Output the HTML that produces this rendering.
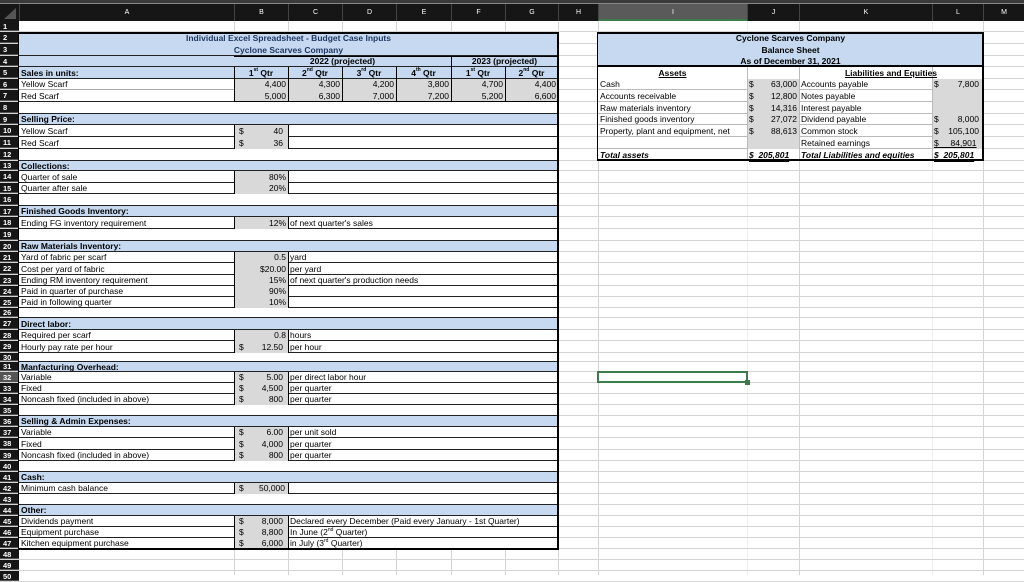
<!DOCTYPE html>
<html><head><meta charset="utf-8">
<style>
*{margin:0;padding:0;box-sizing:border-box}
body{width:1024px;height:575px;overflow:hidden;background:#fff;position:relative;font-family:"Liberation Sans",Arial,sans-serif;font-size:8.5px;color:#000}
div{position:absolute}
.top{left:0;top:0;width:1024px;height:4px;background:#3a3a3a;border-bottom:1px solid #888}
.hdr{left:0;top:4px;width:1024px;height:17px;background:#161616}
.ch{top:4px;height:17px;line-height:17px;text-align:center;color:#fff;font-size:7px;border-left:1px solid #444}
.vl{top:21px;height:554px;width:1px;background:#d4d4d4}
.rw{left:0;width:1024px;border-bottom:1px solid #d4d4d4}
.rw b{position:absolute;left:0;top:0;width:19px;height:100%;background:#161616;color:#fff;font-size:7.5px;padding-left:3px;border-bottom:1px solid #555}
.c{white-space:nowrap;padding:0 2px}
.bl{background:#c6d9f0}
.gy{background:#d9d9d9}
.pl{left:19px;width:539px;border-bottom:1px solid #222}
.rp{left:598px;width:385px;border-bottom:1px solid #bbb}
.A{left:19px;width:215px}.B{left:234px;width:54px}.C{left:288px;width:54px}.D{left:342px;width:54px}.E{left:396px;width:55px}.F{left:451px;width:54px}.G{left:505px;width:53px}
.I{left:598px;width:149px}.J{left:747px;width:52px}.K{left:799px;width:133px}.L{left:932px;width:51px}
.r{text-align:right}.ce{text-align:center}.bd{font-weight:bold}
.br{border-right:1px solid #000}
.d{left:237px}
sup{font-size:5px;vertical-align:top;line-height:7px}
.r1{top:21px;height:11px;line-height:11px}.r2{top:32px;height:12px;line-height:12px}.r3{top:44px;height:12px;line-height:12px}.r4{top:56px;height:11px;line-height:11px}
.r5{top:67px;height:12px;line-height:12px}.r6{top:79px;height:11px;line-height:11px}.r7{top:90px;height:12px;line-height:12px}.r8{top:102px;height:12px;line-height:12px}
.r9{top:114px;height:11px;line-height:11px}.r10{top:125px;height:12px;line-height:12px}.r11{top:137px;height:12px;line-height:12px}.r12{top:149px;height:12px;line-height:12px}
.r13{top:161px;height:10px;line-height:10px}.r14{top:171px;height:12px;line-height:12px}.r15{top:183px;height:11px;line-height:11px}.r16{top:194px;height:12px;line-height:12px}
.r17{top:206px;height:11px;line-height:11px}.r18{top:217px;height:12px;line-height:12px}.r19{top:229px;height:12px;line-height:12px}.r20{top:241px;height:11px;line-height:11px}
.r21{top:252px;height:11px;line-height:11px}.r22{top:263px;height:12px;line-height:12px}.r23{top:275px;height:11px;line-height:11px}.r24{top:286px;height:11px;line-height:11px}
.r25{top:297px;height:11px;line-height:11px}.r26{top:308px;height:10px;line-height:10px}.r27{top:318px;height:12px;line-height:12px}.r28{top:330px;height:11px;line-height:11px}
.r29{top:341px;height:12px;line-height:12px}.r30{top:353px;height:9px;line-height:9px}.r31{top:362px;height:10px;line-height:10px}.r32{top:372px;height:11px;line-height:11px}
.r33{top:383px;height:11px;line-height:11px}.r34{top:394px;height:11px;line-height:11px}.r35{top:405px;height:11px;line-height:11px}.r36{top:416px;height:11px;line-height:11px}
.r37{top:427px;height:11px;line-height:11px}.r38{top:438px;height:12px;line-height:12px}.r39{top:450px;height:11px;line-height:11px}.r40{top:461px;height:11px;line-height:11px}
.r41{top:472px;height:11px;line-height:11px}.r42{top:483px;height:11px;line-height:11px}.r43{top:494px;height:11px;line-height:11px}.r44{top:505px;height:11px;line-height:11px}
.r45{top:516px;height:11px;line-height:11px}.r46{top:527px;height:11px;line-height:11px}.r47{top:538px;height:11px;line-height:11px}.r48{top:549px;height:11px;line-height:11px}
.r49{top:560px;height:11px;line-height:11px}.r50{top:571px;height:11px;line-height:11px}
</style></head><body>
<div class="top"></div>
<div class="hdr"></div>
<div style="left:4px;top:8px;width:0;height:0;border-left:12px solid transparent;border-bottom:11px solid #555"></div>
<div class="ch" style="left:19px;width:215px">A</div><div class="ch" style="left:234px;width:54px">B</div><div class="ch" style="left:288px;width:54px">C</div><div class="ch" style="left:342px;width:54px">D</div><div class="ch" style="left:396px;width:55px">E</div><div class="ch" style="left:451px;width:54px">F</div><div class="ch" style="left:505px;width:53px">G</div><div class="ch" style="left:558px;width:40px">H</div><div class="ch" style="left:598px;width:149px;background:#5a5a5a;border-bottom:2px solid #3c7a4a">I</div><div class="ch" style="left:747px;width:52px">J</div><div class="ch" style="left:799px;width:133px">K</div><div class="ch" style="left:932px;width:51px">L</div><div class="ch" style="left:983px;width:41px">M</div>

<div class="vl" style="left:234px"></div><div class="vl" style="left:288px"></div><div class="vl" style="left:342px"></div><div class="vl" style="left:396px"></div><div class="vl" style="left:451px"></div><div class="vl" style="left:505px"></div><div class="vl" style="left:558px"></div><div class="vl" style="left:598px"></div><div class="vl" style="left:747px;background:#eee"></div><div class="vl" style="left:799px"></div><div class="vl" style="left:932px;background:#eee"></div><div class="vl" style="left:983px"></div>

<div class="rw r1"><b>1</b></div><div class="rw r2"><b>2</b></div><div class="rw r3"><b>3</b></div><div class="rw r4"><b>4</b></div><div class="rw r5"><b>5</b></div><div class="rw r6"><b>6</b></div><div class="rw r7"><b>7</b></div><div class="rw r8"><b>8</b></div><div class="rw r9"><b>9</b></div><div class="rw r10"><b>10</b></div><div class="rw r11"><b>11</b></div><div class="rw r12"><b>12</b></div><div class="rw r13"><b>13</b></div><div class="rw r14"><b>14</b></div><div class="rw r15"><b>15</b></div><div class="rw r16"><b>16</b></div><div class="rw r17"><b>17</b></div><div class="rw r18"><b>18</b></div><div class="rw r19"><b>19</b></div><div class="rw r20"><b>20</b></div><div class="rw r21"><b>21</b></div><div class="rw r22"><b>22</b></div><div class="rw r23"><b>23</b></div><div class="rw r24"><b>24</b></div><div class="rw r25"><b>25</b></div><div class="rw r26"><b>26</b></div><div class="rw r27"><b>27</b></div><div class="rw r28"><b>28</b></div><div class="rw r29"><b>29</b></div><div class="rw r30"><b>30</b></div><div class="rw r31"><b>31</b></div><div class="rw r32"><b style="background:#555">32</b></div><div class="rw r33"><b>33</b></div><div class="rw r34"><b>34</b></div><div class="rw r35"><b>35</b></div><div class="rw r36"><b>36</b></div><div class="rw r37"><b>37</b></div><div class="rw r38"><b>38</b></div><div class="rw r39"><b>39</b></div><div class="rw r40"><b>40</b></div><div class="rw r41"><b>41</b></div><div class="rw r42"><b>42</b></div><div class="rw r43"><b>43</b></div><div class="rw r44"><b>44</b></div><div class="rw r45"><b>45</b></div><div class="rw r46"><b>46</b></div><div class="rw r47"><b>47</b></div><div class="rw r48"><b>48</b></div><div class="rw r49"><b>49</b></div><div class="rw r50"><b>50</b></div>

<!-- LEFT PANEL -->
<div style="left:19px;top:32px;width:539px;height:517px;background:#fff"></div>
<div class="bl" style="left:19px;top:32px;width:539px;height:24px;border-bottom:1px solid #222"></div>
<div class="bl pl r4"></div><div class="bl pl r5"></div>
<div class="pl r6" style="border-color:#aaa"></div><div class="pl r7"></div><div class="pl r8"></div>
<div class="bl pl r9"></div><div class="pl r10"></div><div class="pl r11"></div><div class="pl r12"></div>
<div class="bl pl r13"></div><div class="pl r14"></div><div class="pl r15"></div><div class="pl r16"></div>
<div class="bl pl r17"></div><div class="pl r18"></div><div class="pl r19"></div>
<div class="bl pl r20"></div><div class="pl r21"></div><div class="pl r22"></div><div class="pl r23"></div><div class="pl r24"></div><div class="pl r25"></div><div class="pl r26"></div>
<div class="bl pl r27"></div><div class="pl r28"></div><div class="pl r29"></div><div class="pl r30"></div>
<div class="bl pl r31"></div><div class="pl r32"></div><div class="pl r33"></div><div class="pl r34"></div><div class="pl r35"></div>
<div class="bl pl r36"></div><div class="pl r37"></div><div class="pl r38"></div><div class="pl r39"></div><div class="pl r40"></div>
<div class="bl pl r41"></div><div class="pl r42"></div><div class="pl r43"></div>
<div class="bl pl r44"></div><div class="pl r45"></div><div class="pl r46"></div><div class="pl r47"></div>

<!-- gray inputs -->
<div class="gy" style="left:234px;top:79px;width:324px;height:23px;border-left:1px solid #000;border-bottom:1px solid #000"></div>
<div style="left:288px;top:79px;width:1px;height:23px;background:#000"></div><div style="left:342px;top:79px;width:1px;height:23px;background:#000"></div><div style="left:396px;top:79px;width:1px;height:23px;background:#000"></div><div style="left:451px;top:79px;width:1px;height:23px;background:#000"></div><div style="left:505px;top:79px;width:1px;height:23px;background:#000"></div>
<div style="left:234px;top:67px;width:1px;height:35px;background:#000"></div>
<div style="left:234px;top:56px;width:324px;height:1px;background:#000"></div>
<div style="left:451px;top:56px;width:1px;height:11px;background:#000"></div>
<div style="left:288px;top:67px;width:1px;height:12px;background:#000"></div><div style="left:342px;top:67px;width:1px;height:12px;background:#000"></div><div style="left:396px;top:67px;width:1px;height:12px;background:#000"></div><div style="left:451px;top:67px;width:1px;height:12px;background:#000"></div><div style="left:505px;top:67px;width:1px;height:12px;background:#000"></div>
<div class="gy br" style="left:234px;top:125px;width:55px;height:24px;border-left:1px solid #000"></div>
<div class="gy br" style="left:234px;top:171px;width:55px;height:23px;border-left:1px solid #000"></div>
<div class="gy br" style="left:234px;top:217px;width:55px;height:12px;border-left:1px solid #000"></div>
<div class="gy br" style="left:234px;top:252px;width:55px;height:56px;border-left:1px solid #000"></div>
<div class="gy br" style="left:234px;top:330px;width:55px;height:23px;border-left:1px solid #000"></div>
<div class="gy br" style="left:234px;top:372px;width:55px;height:33px;border-left:1px solid #000"></div>
<div class="gy br" style="left:234px;top:427px;width:55px;height:34px;border-left:1px solid #000"></div>
<div class="gy br" style="left:234px;top:483px;width:55px;height:11px;border-left:1px solid #000"></div>
<div class="gy br" style="left:234px;top:516px;width:55px;height:33px;border-left:1px solid #000"></div>

<!-- left texts -->
<div class="c bd ce" style="left:19px;width:539px;top:33px;height:11px;line-height:11px;color:#1f3864">Individual Excel Spreadsheet - Budget Case Inputs</div>
<div class="c bd ce r3" style="left:19px;width:539px;color:#1f3864">Cyclone Scarves Company</div>
<div class="c bd ce r4" style="left:234px;width:217px">2022 (projected)</div>
<div class="c bd ce r4" style="left:451px;width:107px">2023 (projected)</div>
<div class="c bd A r5">Sales in units:</div>
<div class="c bd ce B r5">1<sup>st</sup> Qtr</div><div class="c bd ce C r5">2<sup>nd</sup> Qtr</div><div class="c bd ce D r5">3<sup>rd</sup> Qtr</div><div class="c bd ce E r5">4<sup>th</sup> Qtr</div><div class="c bd ce F r5">1<sup>st</sup> Qtr</div><div class="c bd ce G r5">2<sup>nd</sup> Qtr</div>
<div class="c A r6">Yellow Scarf</div><div class="c r B r6">4,400</div><div class="c r C r6">4,300</div><div class="c r D r6">4,200</div><div class="c r E r6">3,800</div><div class="c r F r6">4,700</div><div class="c r G r6">4,400</div>
<div class="c A r7">Red Scarf</div><div class="c r B r7">5,000</div><div class="c r C r7">6,300</div><div class="c r D r7">7,000</div><div class="c r E r7">7,200</div><div class="c r F r7">5,200</div><div class="c r G r7">6,600</div>
<div class="c bd A r9">Selling Price:</div>
<div class="c A r10">Yellow Scarf</div><div class="c d r10">$</div><div class="c r B r10" style="padding-right:5px">40</div>
<div class="c A r11">Red Scarf</div><div class="c d r11">$</div><div class="c r B r11" style="padding-right:5px">36</div>
<div class="c bd A r13">Collections:</div>
<div class="c A r14">Quarter of sale</div><div class="c r B r14">80%</div>
<div class="c A r15">Quarter after sale</div><div class="c r B r15">20%</div>
<div class="c bd A r17">Finished Goods Inventory:</div>
<div class="c A r18">Ending FG inventory requirement</div><div class="c r B r18">12%</div><div class="c C r18">of next quarter's sales</div>
<div class="c bd A r20">Raw Materials Inventory:</div>
<div class="c A r21">Yard of fabric per scarf</div><div class="c r B r21">0.5</div><div class="c C r21">yard</div>
<div class="c A r22">Cost per yard of fabric</div><div class="c r B r22">$20.00</div><div class="c C r22">per yard</div>
<div class="c A r23">Ending RM inventory requirement</div><div class="c r B r23">15%</div><div class="c C r23">of next quarter's production needs</div>
<div class="c A r24">Paid in quarter of purchase</div><div class="c r B r24">90%</div>
<div class="c A r25">Paid in following quarter</div><div class="c r B r25">10%</div>
<div class="c bd A r27">Direct labor:</div>
<div class="c A r28">Required per scarf</div><div class="c r B r28">0.8</div><div class="c C r28">hours</div>
<div class="c A r29">Hourly pay rate per hour</div><div class="c d r29">$</div><div class="c r B r29" style="padding-right:5px">12.50</div><div class="c C r29">per hour</div>
<div class="c bd A r31">Manfacturing Overhead:</div>
<div class="c A r32">Variable</div><div class="c d r32">$</div><div class="c r B r32" style="padding-right:5px">5.00</div><div class="c C r32">per direct labor hour</div>
<div class="c A r33">Fixed</div><div class="c d r33">$</div><div class="c r B r33" style="padding-right:5px">4,500</div><div class="c C r33">per quarter</div>
<div class="c A r34">Noncash fixed (included in above)</div><div class="c d r34">$</div><div class="c r B r34" style="padding-right:5px">800</div><div class="c C r34">per quarter</div>
<div class="c bd A r36">Selling &amp; Admin Expenses:</div>
<div class="c A r37">Variable</div><div class="c d r37">$</div><div class="c r B r37" style="padding-right:5px">6.00</div><div class="c C r37">per unit sold</div>
<div class="c A r38">Fixed</div><div class="c d r38">$</div><div class="c r B r38" style="padding-right:5px">4,000</div><div class="c C r38">per quarter</div>
<div class="c A r39">Noncash fixed (included in above)</div><div class="c d r39">$</div><div class="c r B r39" style="padding-right:5px">800</div><div class="c C r39">per quarter</div>
<div class="c bd A r41">Cash:</div>
<div class="c A r42">Minimum cash balance</div><div class="c d r42">$</div><div class="c r B r42" style="padding-right:3px">50,000</div>
<div class="c bd A r44">Other:</div>
<div class="c A r45">Dividends payment</div><div class="c d r45">$</div><div class="c r B r45" style="padding-right:5px">8,000</div><div class="c C r45">Declared every December (Paid every January - 1st Quarter)</div>
<div class="c A r46">Equipment purchase</div><div class="c d r46">$</div><div class="c r B r46" style="padding-right:5px">8,800</div><div class="c C r46">In June (2<sup>nd</sup> Quarter)</div>
<div class="c A r47">Kitchen equipment purchase</div><div class="c d r47">$</div><div class="c r B r47" style="padding-right:5px">6,000</div><div class="c C r47">in July (3<sup>rd</sup> Quarter)</div>
<div style="left:18px;top:32px;width:541px;height:518px;border:2px solid #000;border-left-width:1px"></div>

<!-- RIGHT PANEL -->
<div style="left:598px;top:32px;width:385px;height:128px;background:#fff"></div>
<div class="bl" style="left:598px;top:32px;width:385px;height:35px;border-bottom:2px solid #000"></div>
<div class="rp r5" style="border-color:#fff"></div><div class="rp r6"></div><div class="rp r7"></div><div class="rp r8"></div><div class="rp r9"></div><div class="rp r10"></div><div class="rp r11"></div>
<div class="gy" style="left:747px;top:79px;width:52px;height:70px"></div>
<div class="gy" style="left:932px;top:79px;width:51px;height:70px"></div>
<div style="left:747px;top:67px;width:1px;height:93px;background:#bbb"></div>
<div style="left:799px;top:67px;width:1px;height:93px;background:#bbb"></div>
<div style="left:932px;top:67px;width:1px;height:93px;background:#bbb"></div>
<div class="c bd ce" style="left:598px;width:385px;top:33px;height:11px;line-height:11px">Cyclone Scarves Company</div>
<div class="c bd ce r3" style="left:598px;width:385px">Balance Sheet</div>
<div class="c bd ce" style="left:598px;width:385px;top:56px;height:10px;line-height:10px">As of December 31, 2021</div>
<div class="c bd ce I r5" style="text-decoration:underline">Assets</div>
<div class="c bd ce r5" style="left:799px;width:184px;text-decoration:underline">Liabilities and Equities</div>
<div class="c I r6">Cash</div><div class="c J r6">$</div><div class="c r J r6">63,000</div><div class="c K r6">Accounts payable</div><div class="c L r6">$</div><div class="c r L r6" style="padding-right:4px">7,800</div>
<div class="c I r7">Accounts receivable</div><div class="c J r7">$</div><div class="c r J r7">12,800</div><div class="c K r7">Notes payable</div>
<div class="c I r8">Raw materials inventory</div><div class="c J r8">$</div><div class="c r J r8">14,316</div><div class="c K r8">Interest payable</div>
<div class="c I r9">Finished goods inventory</div><div class="c J r9">$</div><div class="c r J r9">27,072</div><div class="c K r9">Dividend payable</div><div class="c L r9">$</div><div class="c r L r9" style="padding-right:4px">8,000</div>
<div class="c I r10">Property, plant and equipment, net</div><div class="c J r10">$</div><div class="c r J r10">88,613</div><div class="c K r10">Common stock</div><div class="c L r10">$</div><div class="c r L r10" style="padding-right:4px">105,100</div>
<div class="c K r11">Retained earnings</div><div class="c L r11" style="text-decoration:underline">$&nbsp;&nbsp;&nbsp;&nbsp;&nbsp;84,901</div>
<div class="c bd I r12" style="font-style:italic">Total assets</div><div class="c bd J r12" style="font-style:italic;text-decoration:underline double">$&nbsp;&nbsp;205,801</div>
<div class="c bd K r12" style="font-style:italic">Total Liabilities and equities</div><div class="c bd L r12" style="font-style:italic;text-decoration:underline double">$&nbsp;&nbsp;205,801</div>
<div style="left:597px;top:32px;width:387px;height:129px;border:2px solid #000;border-left-width:1px"></div>

<!-- selected cell -->
<div style="left:597px;top:371px;width:151px;height:12px;border:2px solid #3c7a4a"></div>
<div style="left:745px;top:380px;width:5px;height:5px;background:#3c7a4a"></div>
</body></html>
